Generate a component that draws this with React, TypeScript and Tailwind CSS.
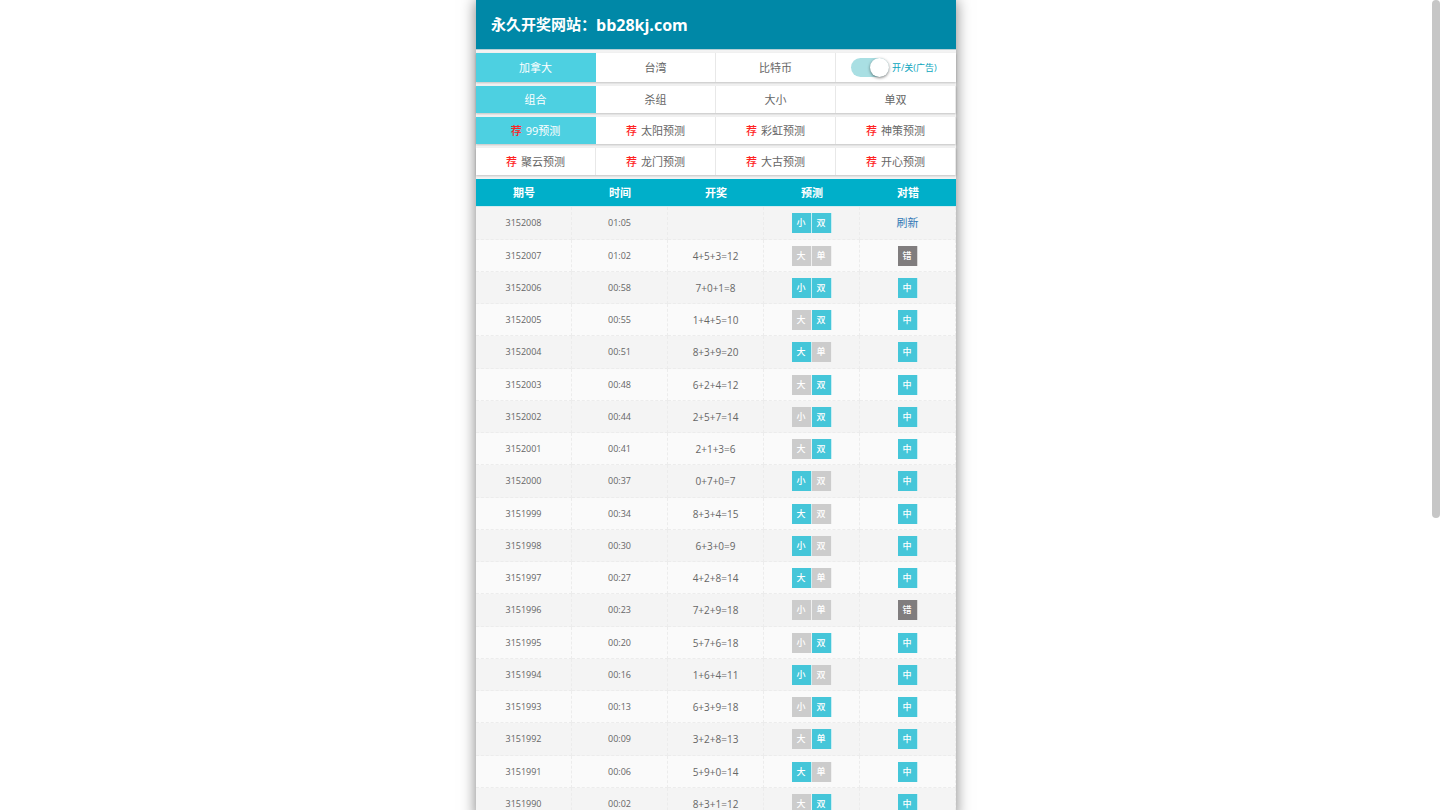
import { useState } from 'react';
import clsx from 'clsx';

const regions = ['加拿大', '台湾', '比特币'];
const modes = ['组合', '杀组', '大小', '单双'];
const sources = [
  ['99预测', '太阳预测', '彩虹预测', '神策预测'],
  ['聚云预测', '龙门预测', '大古预测', '开心预测'],
];
const columns = ['期号', '时间', '开奖', '预测', '对错'];

type Draw = {
  id: number;
  time: string;
  result: string;
  guess: string;
  // which of the two guesses came true
  hits: [boolean, boolean];
  status: string;
};

const draws: Draw[] = [
  { id: 3152008, time: '01:05', result: '', guess: '小双', hits: [true, true], status: '刷新' },
  { id: 3152007, time: '01:02', result: '4+5+3=12', guess: '大单', hits: [false, false], status: '错' },
  { id: 3152006, time: '00:58', result: '7+0+1=8', guess: '小双', hits: [true, true], status: '中' },
  { id: 3152005, time: '00:55', result: '1+4+5=10', guess: '大双', hits: [false, true], status: '中' },
  { id: 3152004, time: '00:51', result: '8+3+9=20', guess: '大单', hits: [true, false], status: '中' },
  { id: 3152003, time: '00:48', result: '6+2+4=12', guess: '大双', hits: [false, true], status: '中' },
  { id: 3152002, time: '00:44', result: '2+5+7=14', guess: '小双', hits: [false, true], status: '中' },
  { id: 3152001, time: '00:41', result: '2+1+3=6', guess: '大双', hits: [false, true], status: '中' },
  { id: 3152000, time: '00:37', result: '0+7+0=7', guess: '小双', hits: [true, false], status: '中' },
  { id: 3151999, time: '00:34', result: '8+3+4=15', guess: '大双', hits: [true, false], status: '中' },
  { id: 3151998, time: '00:30', result: '6+3+0=9', guess: '小双', hits: [true, false], status: '中' },
  { id: 3151997, time: '00:27', result: '4+2+8=14', guess: '大单', hits: [true, false], status: '中' },
  { id: 3151996, time: '00:23', result: '7+2+9=18', guess: '小单', hits: [false, false], status: '错' },
  { id: 3151995, time: '00:20', result: '5+7+6=18', guess: '小双', hits: [false, true], status: '中' },
  { id: 3151994, time: '00:16', result: '1+6+4=11', guess: '小双', hits: [true, false], status: '中' },
  { id: 3151993, time: '00:13', result: '6+3+9=18', guess: '小双', hits: [false, true], status: '中' },
  { id: 3151992, time: '00:09', result: '3+2+8=13', guess: '大单', hits: [false, true], status: '中' },
  { id: 3151991, time: '00:06', result: '5+9+0=14', guess: '大单', hits: [true, false], status: '中' },
  { id: 3151990, time: '00:02', result: '8+3+1=12', guess: '大双', hits: [false, true], status: '中' },
];

const tabRow = 'grid grid-cols-4 bg-white shadow-[0_1px_2px_rgba(0,0,0,0.2)]';

const Tab = ({ label, active, tall, badge, onClick }: {
  label: string;
  active: boolean;
  tall?: boolean;
  badge?: boolean;
  onClick: () => void;
}) => (
  <button
    type="button"
    onClick={onClick}
    className={clsx(
      'flex items-center justify-center gap-1 border-r text-[11px] leading-4',
      tall ? 'h-[29px]' : 'h-[27px]',
      active ? 'border-[#4dd0e1] bg-[#4dd0e1] text-white' : 'border-[#e8e8e8] bg-white text-[#666]'
    )}
  >
    {badge && <span className="font-medium text-[#f22]">荐</span>}
    <span>{label}</span>
  </button>
);

const Chip = ({ text, color }: { text: string; color: string }) => (
  <span className={clsx('flex size-5 items-center justify-center border-r border-white/70 text-[9px] leading-4 font-medium text-white', color)}>
    {text}
  </span>
);

const App = () => {
  const [region, setRegion] = useState('加拿大');
  const [mode, setMode] = useState('组合');
  const [source, setSource] = useState('99预测');
  const [ads, setAds] = useState(true);

  return (
    <div className="flex h-screen bg-white font-['Open_Sans','Noto_Sans_CJK_SC',sans-serif] text-[#666]">
      <div className="flex-1 overflow-y-auto [scrollbar-width:none]">
        <main className="mx-auto max-w-[480px] bg-[#f3f3f3] shadow-[0_0_14px_rgba(0,0,0,0.5)]">
          <header className="border-b border-[#b5cfd5] bg-[#0088a7] px-[15px]">
            <h1 className="flex h-[49px] items-center text-[15px] font-bold text-white">
              永久开奖网站：<span className="text-base">bb28kj.com</span>
            </h1>
          </header>

          <nav className="flex flex-col gap-1 pt-[3px] pb-1">
            <div className={tabRow}>
              {regions.map((name) => (
                <Tab key={name} label={name} tall active={region === name} onClick={() => setRegion(name)} />
              ))}
              <label className="flex items-center gap-[3px] pl-[15px] text-[9px] text-[#0aa5bd]">
                <input
                  type="checkbox"
                  checked={ads}
                  onChange={(e) => setAds(e.target.checked)}
                  className="peer sr-only"
                />
                <span className="flex h-[19px] w-[38px] rounded-full bg-[#ccc] peer-checked:justify-end peer-checked:bg-[#a9dfe3]">
                  <span className="size-[19px] rounded-full bg-white shadow-[0_1px_3px_rgba(0,0,0,0.5)]" />
                </span>
                <span>开/关(广告)</span>
              </label>
            </div>

            <div className={tabRow}>
              {modes.map((name) => (
                <Tab key={name} label={name} active={mode === name} onClick={() => setMode(name)} />
              ))}
            </div>

            {sources.map((row) => (
              <div key={row[0]} className={tabRow}>
                {row.map((name) => (
                  <Tab key={name} label={name} badge active={source === name} onClick={() => setSource(name)} />
                ))}
              </div>
            ))}
          </nav>

          <table className="w-full table-fixed border-separate border-spacing-0 text-center text-[9px] leading-4">
            <thead>
              <tr className="h-7 bg-[#00afc9] text-[11px] text-white">
                {columns.map((name) => (
                  <th key={name} className="border-b border-[#d5ecef] p-0 font-bold">{name}</th>
                ))}
              </tr>
            </thead>
            <tbody className="[&_td]:border-r [&_td]:border-b [&_td]:border-dashed [&_td]:border-[#ececec] [&_td]:p-0">
              {draws.map((draw) => (
                <tr key={draw.id} className="h-8 odd:bg-[#f4f4f4] even:bg-[#fafafa] nth-[4n+1]:h-[33px]">
                  <td>{draw.id}</td>
                  <td>{draw.time}</td>
                  <td className="text-[10px]">{draw.result}</td>
                  <td>
                    <div className="flex justify-center">
                      {draw.guess.split('').map((text, i) => (
                        <Chip key={text} text={text} color={draw.hits[i] ? 'bg-[#45c6d9]' : 'bg-[#ccc]'} />
                      ))}
                    </div>
                  </td>
                  <td>
                    <div className="flex justify-center">
                      {draw.status === '刷新' ? (
                        <a href="#" className="text-[11px] text-[#337ab7]">刷新</a>
                      ) : (
                        <Chip text={draw.status} color={draw.status === '中' ? 'bg-[#45c6d9]' : 'bg-[#807d7e]'} />
                      )}
                    </div>
                  </td>
                </tr>
              ))}
            </tbody>
          </table>
        </main>
      </div>

      {/* Scrollbar */}
      <div className="w-2 bg-white">
        <div className="h-[64%] rounded-full bg-[#c6c6c6]" />
      </div>
    </div>
  );
};

export default App;
